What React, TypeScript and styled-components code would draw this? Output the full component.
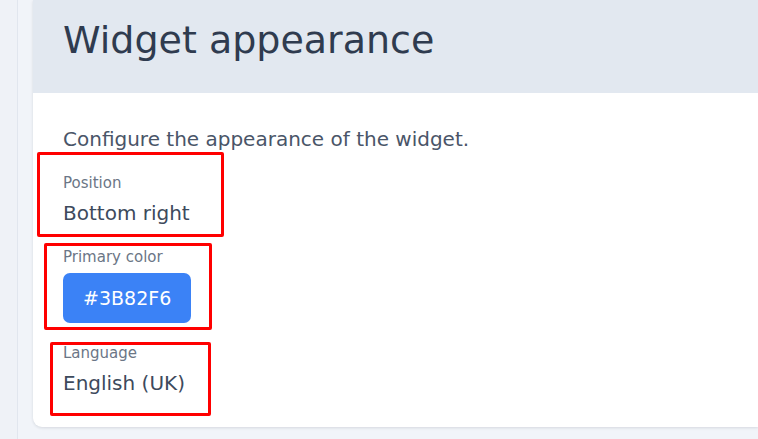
import styled, { createGlobalStyle } from "styled-components";

const GlobalStyle = createGlobalStyle`
  html, body {
    margin: 0;
    padding: 0;
    background: #f1f4f9;
    overflow: hidden;
  }

  body {
    font-family: "DejaVu Sans", "Liberation Sans", sans-serif;
  }
`;

type FieldProps = {
  label: string;
  frame: { top: number; left: number; width: number; height: number };
  children: React.ReactNode;
};

const Field = ({ label, frame, children }: FieldProps) => {
  return (
    <FieldBox>
      <FieldLabel>{label}</FieldLabel>
      {children}
      <Highlight $top={frame.top} $left={frame.left} $width={frame.width} $height={frame.height} />
    </FieldBox>
  );
};

const App = () => {
  return (
    <>
      <GlobalStyle />
      <Shell>
        <Rail />
        <Main>
          <Card>
            <CardHeader>
              <h1>Widget appearance</h1>
            </CardHeader>
            <CardBody>
              <Description>Configure the appearance of the widget.</Description>
              <Fields>
                <Field label="Position" frame={{ top: -21, left: -26, width: 187, height: 85 }}>
                  <FieldValue>Bottom right</FieldValue>
                </Field>
                <Field label="Primary color" frame={{ top: -4, left: -19, width: 168, height: 87 }}>
                  <ColorButton type="button">#3B82F6</ColorButton>
                </Field>
                <Field label="Language" frame={{ top: -1, left: -13, width: 161, height: 74 }}>
                  <FieldValue>English (UK)</FieldValue>
                </Field>
              </Fields>
            </CardBody>
          </Card>
        </Main>
      </Shell>
    </>
  );
};

const Shell = styled.div`
  display: flex;
  min-height: 439px;
`;

const Rail = styled.aside`
  width: 17px;
  flex-shrink: 0;
  background: #eff2f7;
  border-right: 1px solid #e1e6ee;
`;

const Main = styled.main`
  flex: 1;
  min-width: 0;
  padding: 0 0 0 15px;
  background: #f1f4f9;
`;

const Card = styled.section`
  background: #ffffff;
  border-radius: 0 0 0 9px;
  box-shadow: 0 1px 3px rgba(15, 23, 42, 0.12);
  overflow: hidden;
`;

const CardHeader = styled.header`
  background: #e2e8f0;
  padding: 17px 30px 30px;

  h1 {
    margin: 0;
    font-size: 38px;
    line-height: 46px;
    font-weight: 400;
    color: #2f3b4f;
  }
`;

const CardBody = styled.div`
  padding: 32px 30px 30px;
`;

const Description = styled.p`
  margin: 0 0 20px;
  font-size: 20px;
  line-height: 28px;
  color: #4a5568;
`;

const Fields = styled.div`
  display: flex;
  flex-direction: column;
  gap: 20px;
`;

const FieldBox = styled.div`
  position: relative;
  display: flex;
  flex-direction: column;
  align-items: flex-start;
  gap: 6px;
`;

const FieldLabel = styled.span`
  font-size: 15px;
  line-height: 20px;
  color: #6b7686;
`;

const FieldValue = styled.span`
  font-size: 20px;
  line-height: 28px;
  color: #3d4a5c;
`;

const ColorButton = styled.button`
  height: 50px;
  padding: 0 20px;
  border: none;
  border-radius: 7px;
  background: #3b82f6;
  color: #ffffff;
  font-family: inherit;
  font-size: 19px;
  line-height: 24px;
`;

const Highlight = styled.div<{ $top: number; $left: number; $width: number; $height: number }>`
  position: absolute;
  top: ${(p) => p.$top}px;
  left: ${(p) => p.$left}px;
  width: ${(p) => p.$width}px;
  height: ${(p) => p.$height}px;
  box-sizing: border-box;
  border: 3px solid #ff0000;
  border-radius: 2px;
  pointer-events: none;
`;

export default App;
